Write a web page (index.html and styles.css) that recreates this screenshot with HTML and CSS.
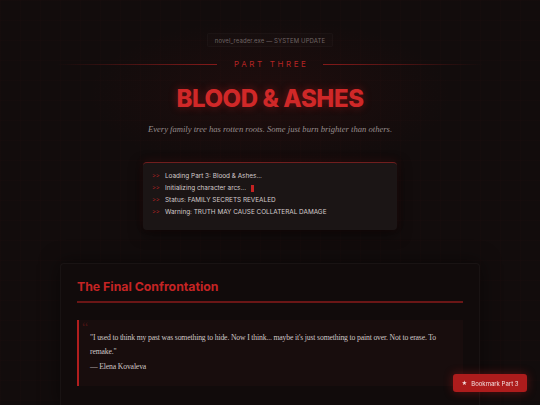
FILE: index.html
```html
<!DOCTYPE html>
<html lang="en">
<head>
<meta charset="utf-8">
<title>Blood &amp; Ashes</title>
<link rel="stylesheet" href="styles.css">
</head>
<body>
<div class="page">
  <header class="hero">
    <div class="sys-label">novel_reader.exe — SYSTEM UPDATE</div>
    <div class="part-row">
      <span class="part-line left"></span>
      <span class="part">PART THREE</span>
      <span class="part-line right"></span>
    </div>
    <h1 class="title">BLOOD &amp; ASHES</h1>
    <p class="tagline">Every family tree has rotten roots. Some just burn brighter than others.</p>
  </header>

  <section class="terminal">
    <div class="term-line"><span class="prompt">&gt;&gt;</span>Loading Part 3: Blood &amp; Ashes...</div>
    <div class="term-line"><span class="prompt">&gt;&gt;</span>Initializing character arcs...<span class="cursor"></span></div>
    <div class="term-line"><span class="prompt">&gt;&gt;</span>Status: FAMILY SECRETS REVEALED</div>
    <div class="term-line"><span class="prompt">&gt;&gt;</span>Warning: TRUTH MAY CAUSE COLLATERAL DAMAGE</div>
  </section>

  <article class="card">
    <h2 class="card-title">The Final Confrontation</h2>
    <blockquote class="quote">
      <span class="quote-mark">&ldquo;</span>
      <p class="quote-text">"I used to think my past was something to hide. Now I think... maybe it's just something to paint over. Not to erase. To remake."</p>
      <p class="quote-by">— Elena Kovaleva</p>
    </blockquote>
  </article>
</div>

<button class="bookmark"><span class="star">★</span>Bookmark Part 3</button>
</body>
</html>
```
FILE: styles.css
```css
* { box-sizing: border-box; }
html, body { margin: 0; padding: 0; }
body {
  background-color: #120c0c;
  background-image:
    radial-gradient(ellipse 260px 110px at 50% 95px, rgba(120, 20, 20, 0.13), rgba(0,0,0,0) 70%),
    linear-gradient(rgba(255, 60, 60, 0.012) 1px, transparent 1px),
    linear-gradient(90deg, rgba(255, 60, 60, 0.012) 1px, transparent 1px);
  background-size: 100% 100%, 20px 20px, 20px 20px;
  color: #d8d0d0;
  font-family: Inter, "DejaVu Sans", sans-serif;
  height: 405px;
  overflow: hidden;
}
.page {
  display: flex;
  flex-direction: column;
  align-items: center;
  padding-top: 33px;
}
.hero {
  display: flex;
  flex-direction: column;
  align-items: center;
  width: 100%;
}
.sys-label {
  font-size: 6px;
  line-height: 14px;
  height: 14px;
  padding: 0 7px;
  color: #6e6464;
  background: rgba(255,255,255,0.012);
  border: 1px solid rgba(255,255,255,0.025);
  border-radius: 2px;
  letter-spacing: 0.1px;
}
.part-row {
  margin-top: 11px;
  width: 100%;
  display: flex;
  align-items: center;
  justify-content: center;
  gap: 14px;
}
.part-line {
  height: 1px;
  width: 160px;
}
.part-line.left { background: linear-gradient(90deg, rgba(170,30,30,0), rgba(170,30,30,0.75)); }
.part-line.right { background: linear-gradient(90deg, rgba(170,30,30,0.75), rgba(170,30,30,0)); }
.part {
  font-size: 8px;
  line-height: 12px;
  letter-spacing: 2.6px;
  color: #b42424;
  padding-left: 2.6px;
}
.title {
  margin: 14px 0 0;
  font-size: 24px;
  line-height: 30px;
  font-weight: 800;
  letter-spacing: -0.4px;
  color: #d02828;
  text-shadow: 0 0 9px rgba(220, 30, 30, 0.4);
}
.tagline {
  margin: 9px 0 0;
  font-family: "Liberation Serif", "DejaVu Serif", serif;
  font-style: italic;
  font-size: 8.6px;
  line-height: 12px;
  color: #968c8c;
}
.terminal {
  margin-top: 27px;
  width: 254px;
  padding: 7px 9px 12px;
  background: #1b1515;
  border-radius: 4px;
  border-top: 1px solid rgba(200, 40, 40, 0.5);
  box-shadow: 0 -2px 8px rgba(200,30,30,0.1), 0 4px 14px rgba(0,0,0,0.5);
}
.term-line {
  font-size: 6.4px;
  line-height: 12px;
  color: #d4cccc;
  display: flex;
  align-items: center;
}
.prompt {
  color: #a82222;
  width: 13px;
  font-size: 6px;
  letter-spacing: -0.3px;
}
.cursor {
  display: inline-block;
  width: 3px;
  height: 7px;
  margin-left: 5px;
  background: #c42222;
}
.card {
  margin-top: 33px;
  width: 420px;
  height: 143px;
  padding: 15px 16px 0;
  background: #110b0b;
  border: 1px solid rgba(255,255,255,0.035);
  border-bottom: none;
  border-radius: 4px 4px 0 0;
  box-shadow: 0 0 20px rgba(0,0,0,0.5);
}
.card-title {
  margin: 0;
  font-size: 12.3px;
  line-height: 16px;
  font-weight: 700;
  color: #c42424;
  padding-bottom: 6px;
  border-bottom: 2px solid #6a1616;
}
.quote {
  position: relative;
  margin: 17px 0 0;
  padding: 11px 6px 12px 11px;
  background: #180d0d;
  border-left: 2px solid #b01e1e;
  font-family: "Liberation Serif", "DejaVu Serif", serif;
}
.quote-mark {
  position: absolute;
  left: 3px;
  top: 1px;
  font-size: 14px;
  line-height: 14px;
  color: rgba(170, 30, 30, 0.35);
}
.quote-text {
  margin: 0;
  font-size: 7.7px;
  letter-spacing: -0.15px;
  line-height: 14px;
  color: #cfc6c6;
}
.quote-by {
  margin: 1px 0 0;
  font-size: 7.7px;
  letter-spacing: -0.15px;
  line-height: 14px;
  color: #cfc6c6;
}
.bookmark {
  position: fixed;
  right: 13px;
  bottom: 13px;
  width: 74px;
  height: 18px;
  padding: 0;
  border: none;
  border-radius: 3px;
  background: #ad1c1c;
  color: #f2dede;
  font-family: Inter, "DejaVu Sans", sans-serif;
  font-size: 6px;
  display: flex;
  align-items: center;
  justify-content: center;
  gap: 4px;
  box-shadow: 0 0 10px rgba(200, 30, 30, 0.4);
}
.star { font-size: 5.5px; }
```
